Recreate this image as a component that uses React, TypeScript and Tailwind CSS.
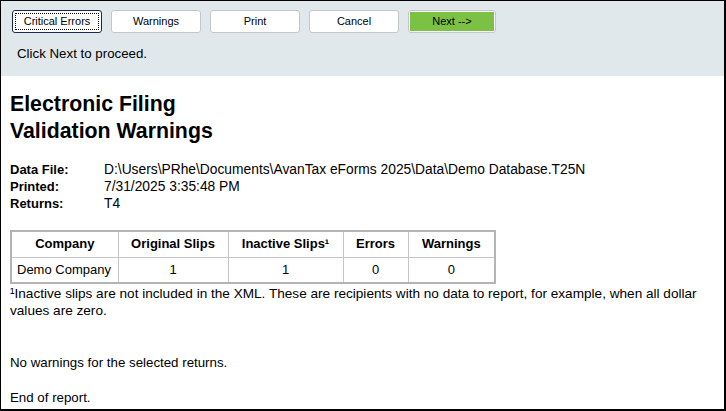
const rows = [
  { label: 'Data File:', value: 'D:\\Users\\PRhe\\Documents\\AvanTax eForms 2025\\Data\\Demo Database.T25N' },
  { label: 'Printed:', value: '7/31/2025 3:35:48 PM' },
  { label: 'Returns:', value: 'T4' },
];

const Toolbar = () => {
  const btn = 'h-[23px] w-[90px] rounded-[3px] border border-[#c3c7ca] bg-white text-[11px] text-black';
  return (
    <div className="bg-[#e1e8ec] pt-[9px] pb-[14px] pl-[11px]">
      <div className="flex gap-[9px]">
        <button className="h-[23px] w-[90px] rounded-[3px] border border-[#1b2a4a] bg-white p-[2px] text-[11px] text-black">
          <span className="flex h-full w-full items-center justify-center border border-dotted border-black">
            Critical Errors
          </span>
        </button>
        <button className={btn}>Warnings</button>
        <button className={btn}>Print</button>
        <button className={btn}>Cancel</button>
        <button className="h-[23px] w-[88px] rounded-[3px] border border-[#c3c7ca] bg-white p-[1px] text-[11px] text-black">
          <span className="flex h-full w-full items-center justify-center bg-[#7bc143]">Next --&gt;</span>
        </button>
      </div>
      <div className="mt-[13px] pl-[5px] text-[13.3px] leading-[16px] text-black">Click Next to proceed.</div>
    </div>
  );
};

const Report = () => {
  const th = 'border border-[#c6c6c6] h-[26px] px-1 text-center font-bold';
  const td = 'border border-[#c6c6c6] h-[26px] px-1 text-center';
  return (
    <div className="bg-white pl-[9px] pr-[2px] pt-[15px] text-[13px] text-black">
      <h1 className="text-[21.3px] font-bold leading-[27px]">
        Electronic Filing
        <br />
        Validation Warnings
      </h1>
      <div className="mt-[16px] leading-[17px]">
        {rows.map((r) => (
          <div key={r.label} className="flex">
            <div className="w-[94px] font-bold">{r.label}</div>
            <div className="text-[13.8px]">{r.value}</div>
          </div>
        ))}
      </div>
      <table className="mt-[18px] table-fixed border-collapse border-2 border-[#b4b4b4] leading-[16px]">
        <thead>
          <tr>
            <th className={`${th} w-[107px]`}>Company</th>
            <th className={`${th} w-[110px]`}>Original Slips</th>
            <th className={`${th} w-[115px]`}>Inactive Slips¹</th>
            <th className={`${th} w-[65px]`}>Errors</th>
            <th className={`${th} w-[87px]`}>Warnings</th>
          </tr>
        </thead>
        <tbody>
          <tr>
            <td className="border border-[#c6c6c6] h-[26px] px-[5px] text-left whitespace-nowrap">Demo Company</td>
            <td className={td}>1</td>
            <td className={td}>1</td>
            <td className={td}>0</td>
            <td className={td}>0</td>
          </tr>
        </tbody>
      </table>
      <p className="mt-[1px] text-[13.6px] leading-[17px]">
        ¹Inactive slips are not included in the XML. These are recipients with no data to report, for example, when all
        dollar values are zero.
      </p>
      <p className="mt-[35px] text-[13.3px] leading-[17px]">No warnings for the selected returns.</p>
      <p className="mt-[18px] pb-[4px] text-[13.3px] leading-[17px]">End of report.</p>
    </div>
  );
};

export default function App() {
  return (
    <div
      className="h-[411px] w-[726px] overflow-hidden border-t border-l border-r-2 border-b-2 border-black bg-white"
      style={{ fontFamily: '"Liberation Sans", Arial, sans-serif' }}
    >
      <Toolbar />
      <Report />
    </div>
  );
}
